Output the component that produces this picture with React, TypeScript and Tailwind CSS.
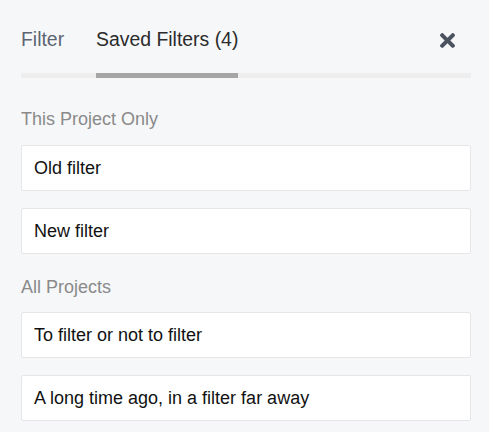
import React from "react";

const font = { fontFamily: '"Liberation Sans", Arial, Helvetica, sans-serif' };

function CloseIcon() {
  return (
    <svg width="15" height="15" viewBox="0 80 352 352" fill="#4b5361">
      <path d="M242.72 256l100.07-100.07c12.28-12.28 12.28-32.19 0-44.48l-22.24-22.24c-12.28-12.28-32.19-12.28-44.48 0L176 189.28 75.930 89.21c-12.28-12.28-32.19-12.28-44.48 0L9.21 111.45c-12.28 12.28-12.28 32.19 0 44.48L109.28 256 9.21 356.07c-12.28 12.28-12.28 32.19 0 44.48l22.24 22.240c12.28 12.28 32.2 12.28 44.48 0L176 322.72l100.07 100.07c12.28 12.28 32.2 12.28 44.48 0l22.24-22.24c12.28-12.28 12.28-32.19 0-44.48L242.72 256z" />
    </svg>
  );
}

function Card({ children }: { children: React.ReactNode }) {
  return (
    <div className="h-[46px] flex items-center bg-white border border-[#e6e6e8] rounded-[2px] pl-[12px] text-[18px] leading-[21px] text-[#111]">
      {children}
    </div>
  );
}

export default function App() {
  return (
    <div className="w-[489px] h-[432px] bg-[#f6f7f9] pl-[21px] pr-[18px] overflow-hidden" style={font}>
      <div className="flex items-start pt-[28px] border-b-[5px] border-[#eeeeee]">
        <div className="pb-[23px] -mb-[5px] border-b-[5px] border-transparent text-[19.4px] leading-[22px] text-[#5d6573]">
          Filter
        </div>
        <div className="ml-[32px] pb-[23px] -mb-[5px] border-b-[5px] border-[#a6a6a6] text-[19.4px] leading-[22px] text-[#2b2b2b]">
          Saved Filters (4)
        </div>
        <div className="ml-auto mr-[16px] mt-[5px]">
          <CloseIcon />
        </div>
      </div>

      <div className="mt-[31px] text-[18px] leading-[21px] text-[#8a8a8a]">This Project Only</div>
      <div className="mt-[15px] flex flex-col gap-[17px]">
        <Card>Old filter</Card>
        <Card>New filter</Card>
      </div>

      <div className="mt-[23px] text-[18px] leading-[21px] text-[#8a8a8a]">All Projects</div>
      <div className="mt-[14px] flex flex-col gap-[17px]">
        <Card>To filter or not to filter</Card>
        <Card>A long time ago, in a filter far away</Card>
      </div>
    </div>
  );
}
